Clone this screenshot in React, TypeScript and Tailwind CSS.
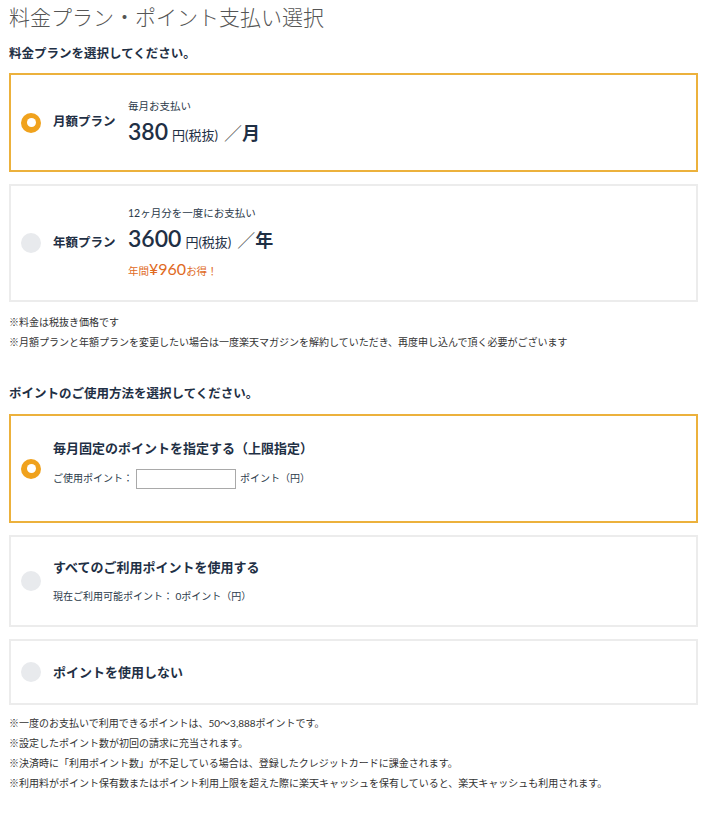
import React from 'react';

const font = "font-['Lato','Noto_Sans_CJK_JP',sans-serif]";

function Radio({ on }: { on: boolean }) {
  return on ? (
    <span className="flex h-[20px] w-[20px] shrink-0 items-center justify-center rounded-full bg-[#f0a21d]">
      <span className="h-[9px] w-[9px] rounded-full bg-white" />
    </span>
  ) : (
    <span className="h-[20px] w-[20px] shrink-0 rounded-full bg-[#e8eaed]" />
  );
}

function Card({ on, className, children }: { on: boolean; className: string; children: React.ReactNode }) {
  return (
    <div
      className={`flex items-center border-2 pl-[10px] ${on ? 'border-[#ecb13c]' : 'border-[#ececec]'} ${className}`}
    >
      <Radio on={on} />
      {children}
    </div>
  );
}

function PlanPrice({ note, price, unit, extra }: { note: string; price: string; unit: string; extra?: React.ReactNode }) {
  return (
    <div className="ml-[12px] flex flex-col">
      <div className="text-[10.5px] leading-[14px] text-[#2b3a4a]">{note}</div>
      <div className="mt-[5px] flex items-baseline text-[#1f3045]">
        <span className="text-[23px] font-semibold leading-[26px]">{price}</span>
        <span className="ml-[4px] text-[13px]">円(税抜)</span>
        <span className="ml-[6px] text-[18px] font-light text-[#555]">／</span>
        <span className="text-[18px] font-bold">{unit}</span>
      </div>
      {extra}
    </div>
  );
}

export default function App() {
  return (
    <div className={`${font} w-[710px] bg-white pl-[9px] pt-[3px] text-[#1f3045]`}>
      <h1 className="text-[21px] font-light leading-[28px] text-[#555]">料金プラン・ポイント支払い選択</h1>
      <h2 className="mt-[14px] text-[12.5px] font-bold leading-[18px]">料金プランを選択してください。</h2>

      <div className="mt-[10px] flex w-[689px] flex-col gap-[12px]">
        <Card on className="h-[99px]">
          <span className="ml-[12px] w-[63px] text-[12.5px] font-bold">月額プラン</span>
          <PlanPrice note="毎月お支払い" price="380" unit="月" />
        </Card>
        <Card on={false} className="h-[118px]">
          <span className="ml-[12px] w-[63px] text-[12.5px] font-bold">年額プラン</span>
          <PlanPrice
            note="12ヶ月分を一度にお支払い"
            price="3600"
            unit="年"
            extra={
              <div className="mt-[3px] flex items-baseline text-[#e06a1e]">
                <span className="text-[10.5px]">年間</span>
                <span className="text-[16px]">¥960</span>
                <span className="text-[10.5px]">お得！</span>
              </div>
            }
          />
        </Card>
      </div>

      <div className="mt-[12px] flex flex-col gap-[4px] text-[10px] leading-[16px] text-[#333]">
        <p>※料金は税抜き価格です</p>
        <p>※月額プランと年額プランを変更したい場合は一度楽天マガジンを解約していただき、再度申し込んで頂く必要がございます</p>
      </div>

      <h2 className="mt-[35px] text-[12.5px] font-bold leading-[18px]">ポイントのご使用方法を選択してください。</h2>

      <div className="mt-[11px] flex w-[689px] flex-col gap-[12px]">
        <Card on className="h-[109px]">
          <div className="mb-[10px] ml-[12px] flex flex-col">
            <div className="text-[13px] font-bold leading-[18px]">毎月固定のポイントを指定する（上限指定）</div>
            <div className="mt-[12px] flex items-center text-[10px] text-[#2b3a4a]">
              <span>ご使用ポイント：</span>
              <input className="ml-[3px] h-[20px] w-[100px] border border-[#a9a9a9] bg-white" />
              <span className="ml-[4px]">ポイント（円）</span>
            </div>
          </div>
        </Card>
        <Card on={false} className="h-[92px]">
          <div className="ml-[12px] flex flex-col">
            <div className="text-[13px] font-bold leading-[18px]">すべてのご利用ポイントを使用する</div>
            <div className="mt-[13px] text-[10px] text-[#2b3a4a]">現在ご利用可能ポイント： 0ポイント（円）</div>
          </div>
        </Card>
        <Card on={false} className="h-[66px]">
          <div className="ml-[12px] text-[13px] font-bold leading-[18px]">ポイントを使用しない</div>
        </Card>
      </div>

      <div className="mt-[10px] flex flex-col gap-[4px] pb-[24px] text-[10px] leading-[16px] text-[#333]">
        <p>※一度のお支払いで利用できるポイントは、50〜3,888ポイントです。</p>
        <p>※設定したポイント数が初回の請求に充当されます。</p>
        <p>※決済時に「利用ポイント数」が不足している場合は、登録したクレジットカードに課金されます。</p>
        <p>※利用料がポイント保有数またはポイント利用上限を超えた際に楽天キャッシュを保有していると、楽天キャッシュも利用されます。</p>
      </div>
    </div>
  );
}
